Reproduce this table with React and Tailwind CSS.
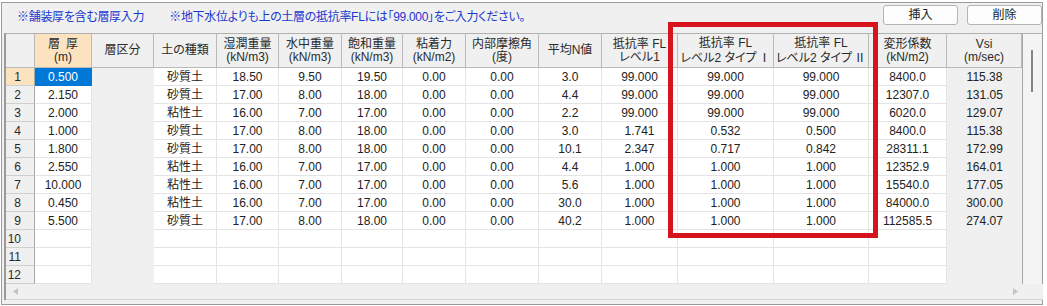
import React from "react";

const R1 = <span className="font-['Noto_Sans_CJK_JP',sans-serif]">Ⅰ</span>;
const R2 = <span className="font-['Noto_Sans_CJK_JP',sans-serif]">Ⅱ</span>;

const headers = [
  ["", null],
  ["層\u2002厚", "(m)"],
  ["層区分", null],
  ["土の種類", null],
  ["湿潤重量", "(kN/m3)"],
  ["水中重量", "(kN/m3)"],
  ["飽和重量", "(kN/m3)"],
  ["粘着力", "(kN/m2)"],
  ["内部摩擦角", "(度)"],
  ["平均N値", null],
  ["抵抗率 FL", "レベル1"],
  ["抵抗率 FL", <>レベル2 タイプ<span className="ml-[2px]">{R1}</span></>],
  ["抵抗率 FL", <>レベル2 タイプ<span className="ml-[2px]">{R2}</span></>],
  ["変形係数", "(kN/m2)"],
  ["Vsi", "(m/sec)"],
];

const rows = [
  ["0.500", "", "砂質土", "18.50", "9.50", "19.50", "0.00", "0.00", "3.0", "99.000", "99.000", "99.000", "8400.0", "115.38"],
  ["2.150", "", "砂質土", "17.00", "8.00", "18.00", "0.00", "0.00", "4.4", "99.000", "99.000", "99.000", "12307.0", "131.05"],
  ["2.000", "", "粘性土", "16.00", "7.00", "17.00", "0.00", "0.00", "2.2", "99.000", "99.000", "99.000", "6020.0", "129.07"],
  ["1.000", "", "砂質土", "17.00", "8.00", "18.00", "0.00", "0.00", "3.0", "1.741", "0.532", "0.500", "8400.0", "115.38"],
  ["1.800", "", "砂質土", "17.00", "8.00", "18.00", "0.00", "0.00", "10.1", "2.347", "0.717", "0.842", "28311.1", "172.99"],
  ["2.550", "", "粘性土", "16.00", "7.00", "17.00", "0.00", "0.00", "4.4", "1.000", "1.000", "1.000", "12352.9", "164.01"],
  ["10.000", "", "粘性土", "16.00", "7.00", "17.00", "0.00", "0.00", "5.6", "1.000", "1.000", "1.000", "15540.0", "177.05"],
  ["0.450", "", "粘性土", "16.00", "7.00", "17.00", "0.00", "0.00", "30.0", "1.000", "1.000", "1.000", "84000.0", "300.00"],
  ["5.500", "", "砂質土", "17.00", "8.00", "18.00", "0.00", "0.00", "40.2", "1.000", "1.000", "1.000", "112585.5", "274.07"],
  ["", "", "", "", "", "", "", "", "", "", "", "", "", ""],
  ["", "", "", "", "", "", "", "", "", "", "", "", "", ""],
  ["", "", "", "", "", "", "", "", "", "", "", "", "", ""],
];

const whiteCell =
  "bg-white border-r border-b border-[#e4e4e4] flex items-center justify-center text-[#222] whitespace-nowrap";
const grayCell =
  "bg-[#f0f0f0] flex items-center justify-center text-[#222] whitespace-nowrap";
const selCell =
  "bg-[#0078d7] border-r border-b border-[#0078d7] flex items-center justify-center text-white whitespace-nowrap";

function HeaderCell({ h, idx }) {
  const base =
    "border-r border-b border-[#b9b9b9] flex flex-col items-center justify-center leading-[13px] text-[#2a2a2a] whitespace-nowrap [font-feature-settings:'palt']";
  const bg = idx === 1 ? "bg-[#fce3bf]" : "bg-[#f0f0f0]";
  return (
    <div className={`${base} ${bg}`}>
      <span>{h[0]}</span>
      {h[1] && <span>{h[1]}</span>}
    </div>
  );
}

export default function App() {
  return (
    <div className="relative w-[1047px] h-[306px] bg-white overflow-hidden font-['Liberation_Sans','Noto_Sans_CJK_JP',sans-serif] text-[12px]">
      <div className="ml-[1px] mt-[2px] w-[1042px] h-[303px] border border-[#9c9c9c] bg-[#f0f0f0] flex flex-col">
        {/* top bar */}
        <div className="h-[30px] flex items-start justify-between">
          <div className="pt-[6px] pl-[15px] flex text-[#1b38cf] leading-[16px] [font-feature-settings:'palt']">
            <span className="tracking-[-0.3px]">※舗装厚を含む層厚入力</span>
            <span className="ml-[25px] tracking-[-0.3px]">※地下水位よりも上の土層の抵抗率FLには「99.000」をご入力ください。</span>
          </div>
          <div className="flex gap-[9px] pt-[2px]">
            <button className="w-[75px] h-[20px] border border-[#b4b4b4] rounded-[3px] bg-[#fdfdfd] text-[#1a1a1a] text-[12px] leading-[18px]">
              挿入
            </button>
            <button className="w-[75px] h-[20px] border border-[#b4b4b4] rounded-[3px] bg-[#fdfdfd] text-[#1a1a1a] text-[12px] leading-[18px]">
              削除
            </button>
          </div>
        </div>

        {/* grid container */}
        <div className="ml-[2px] w-[1039px] border-l-2 border-t border-[#9a9a9a] border-t-[#b0b0b0] flex flex-col">
          <div className="flex">
            <div className="grid grid-cols-[29px_57px_62px_63px_62px_63px_61px_63px_73px_63px_76px_96px_95px_78px_75px] grid-rows-[34px_repeat(12,18px)]">
              {headers.map((h, i) => (
                <HeaderCell key={"h" + i} h={h} idx={i} />
              ))}
              {rows.map((r, ri) => (
                <React.Fragment key={"r" + ri}>
                  <div
                    className={`${
                      ri === 0 ? "bg-[#fce3bf]" : "bg-[#f0f0f0]"
                    } border-r border-r-[#a8a8a8] border-b border-b-[#cfcfcf] flex items-center justify-end pr-[13px] text-[#2a2a2a]`}
                  >
                    {ri + 1}
                  </div>
                  {r.map((v, ci) => {
                    let cls = whiteCell;
                    if (ci === 1 || ci === 13) cls = grayCell;
                    if (ri === 0 && ci === 0) cls = selCell;
                    return (
                      <div key={ci} className={cls}>
                        {v}
                      </div>
                    );
                  })}
                </React.Fragment>
              ))}
            </div>
            {/* vertical scrollbar */}
            <div className="w-[19px] h-[250px] border-l border-[#a8a8a8] bg-[#f4f4f4] flex justify-center pt-[16px]">
              <div className="w-[2px] h-[42px] bg-[#858585]" />
            </div>
          </div>
          {/* horizontal scrollbar */}
          <div className="h-[16px] bg-[#f0f0f0] border-b border-[#d4d4d4] flex items-center justify-between px-[7px]">
            <svg width="5" height="7" viewBox="0 0 5 7">
              <polygon points="5,0 0,3.5 5,7" fill="#c4c4c4" />
            </svg>
            <svg width="5" height="7" viewBox="0 0 5 7" className="mr-[18px]">
              <polygon points="0,0 5,3.5 0,7" fill="#c4c4c4" />
            </svg>
          </div>
        </div>
      </div>

      {/* red highlight box */}
      <div className="absolute left-[668px] top-[22px] w-[210px] h-[216px] border-[5px] border-[#d7141e] pointer-events-none" />
    </div>
  );
}
